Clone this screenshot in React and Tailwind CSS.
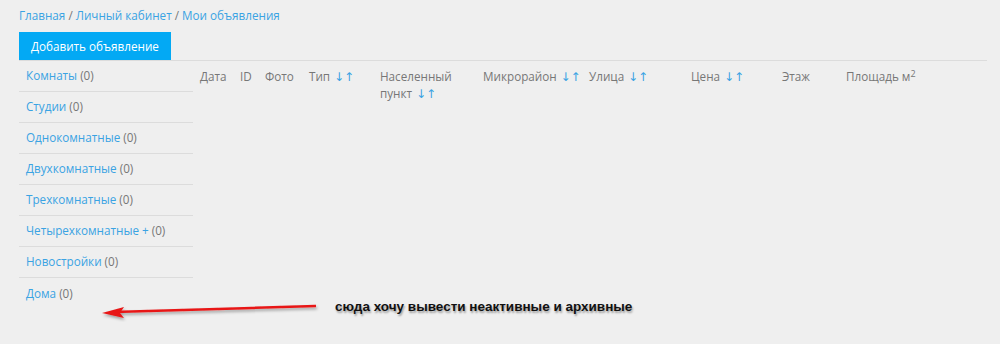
import React from 'react';

const categories = [
    'Комнаты',
    'Студии',
    'Однокомнатные',
    'Двухкомнатные',
    'Трехкомнатные',
    'Четырехкомнатные +',
    'Новостройки',
    'Дома',
];

const Sort = () => (
    <span className="text-[#3aa3e3] text-[12px]" style={{ fontFamily: '"DejaVu Sans", sans-serif' }}>
        {' '}↓↑
    </span>
);

const columns = [
    { label: 'Дата', w: 'w-[40px]' },
    { label: 'ID', w: 'w-[25px]' },
    { label: 'Фото', w: 'w-[44px]' },
    { label: 'Тип', w: 'w-[71px]', sort: true },
    { label: 'Населенный пункт', w: 'w-[103px]', sort: true },
    { label: 'Микрорайон', w: 'w-[106px]', sort: true },
    { label: 'Улица', w: 'w-[102px]', sort: true },
    { label: 'Цена', w: 'w-[91px]', sort: true },
    { label: 'Этаж', w: 'w-[64px]' },
];

const App = () => {
    return (
        <div className="relative w-[1000px] h-[344px] bg-[#efefef] text-[11.7px] text-[#777] overflow-hidden" style={{ fontFamily: '"Open Sans", sans-serif' }}>
            <div className="pl-[19px] pr-[13px] pt-[6px]">
                <div className="text-[#3aa3e3] leading-[18px]">
                    Главная <span className="text-[#777]">/</span> Личный кабинет <span className="text-[#777]">/</span> Мои объявления
                </div>

                <button className="mt-[8px] h-[28px] px-[12px] bg-[#03a9f4] text-white leading-[28px]">
                    Добавить объявление
                </button>

                <div className="flex border-t border-[#dcdcdc]">
                    {/* sidebar */}
                    <div className="w-[174px] shrink-0">
                        {categories.map((c, i) => (
                            <div
                                key={c}
                                className={`h-[31px] pl-[7px] flex items-center ${i < categories.length - 1 ? 'border-b border-[#dcdcdc]' : ''}`}
                            >
                                <span className="text-[#3aa3e3]">{c}</span>&nbsp;(0)
                            </div>
                        ))}
                    </div>

                    {/* table header */}
                    <div className="flex pl-[7px] pt-[7px] leading-[17px]">
                        {columns.map((col) => (
                            <div key={col.label} className={`${col.w} shrink-0`}>
                                {col.label}
                                {col.sort && <Sort />}
                            </div>
                        ))}
                        <div className="shrink-0">
                            Площадь м<sup className="text-[9px]">2</sup>
                        </div>
                    </div>
                </div>
            </div>

            {/* annotation */}
            <svg className="absolute left-[96px] top-[298px]" width="226" height="24" viewBox="0 0 226 24">
                <defs>
                    <filter id="sh" x="-10%" y="-50%" width="120%" height="200%">
                        <feDropShadow dx="1" dy="2" stdDeviation="1.5" floodColor="#000" floodOpacity="0.35" />
                    </filter>
                </defs>
                <g filter="url(#sh)">
                    <line x1="18" y1="14" x2="220" y2="8" stroke="#e81818" strokeWidth="2.5" />
                    <polygon points="6,15 28,9 24,15 28,20" fill="#e81818" />
                </g>
            </svg>
            <div
                className="absolute left-[335px] top-[297px] text-[13.5px] font-bold text-[#111]"
                style={{ fontFamily: '"Liberation Sans", Arial, sans-serif', textShadow: '1px 2px 2px rgba(0,0,0,0.35)' }}
            >
                сюда хочу вывести неактивные и архивные
            </div>
        </div>
    );
};

export default App;
